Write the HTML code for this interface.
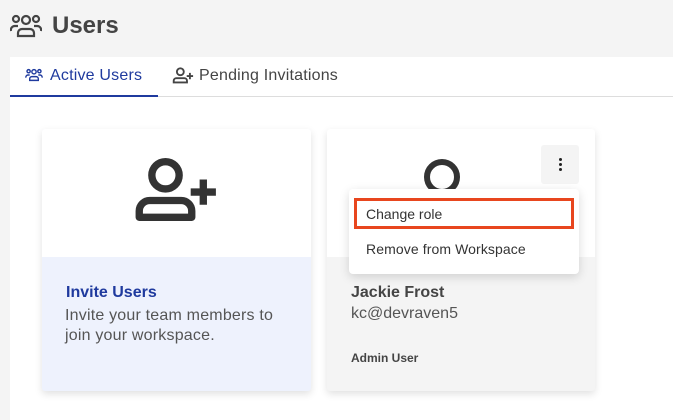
<!DOCTYPE html>
<html><head><style>
*{margin:0;padding:0;box-sizing:border-box}
body{width:673px;height:420px;background:#f4f4f4;font-family:"Liberation Sans",sans-serif;position:relative;overflow:hidden;color:#333}
.abs{position:absolute}
</style></head><body>
<svg class="abs" style="left:10px;top:13px" width="32" height="26" viewBox="0 0 32 26" fill="none" stroke="#444" stroke-width="2.2">
<circle cx="16" cy="7" r="4"/><circle cx="6" cy="6" r="3"/><circle cx="26" cy="6" r="3"/>
<path d="M8 23v-3a4 4 0 0 1 4-4h8a4 4 0 0 1 4 4v3z"/><path d="M1 18a4 4 0 0 1 4-5h3M31 18a4 4 0 0 0-4-5h-3"/>
</svg>
<div class="abs" style="left:52px;top:12px;font-size:24px;font-weight:bold;color:#444">Users</div>
<div class="abs" style="left:10px;top:57px;width:663px;height:363px;background:#fff"></div>
<div class="abs" style="left:10px;top:96px;width:663px;height:1px;background:#ddd"></div>
<div class="abs" style="left:10px;top:95px;width:148px;height:2px;background:#1f3a9e"></div>
<svg class="abs" style="left:24px;top:68px" width="20" height="14" viewBox="0 0 32 26" fill="none" stroke="#1f3a9e" stroke-width="2.6">
<circle cx="16" cy="7" r="4"/><circle cx="6" cy="6" r="3"/><circle cx="26" cy="6" r="3"/>
<path d="M8 23v-3a4 4 0 0 1 4-4h8a4 4 0 0 1 4 4v3z"/><path d="M1 18a4 4 0 0 1 4-5h3M31 18a4 4 0 0 0-4-5h-3"/>
</svg>
<div class="abs" style="left:50px;top:67px;font-size:16px;color:#1f3a9e;letter-spacing:0.2px">Active Users</div>
<svg class="abs" style="left:172px;top:67px" width="22" height="17" viewBox="0 0 80 64" fill="none" stroke="#444" stroke-width="7">
<circle cx="30" cy="18" r="13"/><path d="M5 58v-6a10 10 0 0 1 10-10h30a10 10 0 0 1 10 10v6z"/><path d="M66 22v24M54 34h24"/>
</svg>
<div class="abs" style="left:199px;top:67px;font-size:16px;color:#444;letter-spacing:0.2px">Pending Invitations</div>

<div class="abs" style="left:42px;top:129px;width:269px;height:262px;background:#eef2fd;box-shadow:0 3px 8px rgba(0,0,0,.12);border-radius:3px;overflow:hidden">
<div style="height:128px;background:#fff"></div>
<div class="abs" style="left:24px;top:155px;font-size:16px;font-weight:bold;color:#1f3a9e">Invite Users</div>
<div class="abs" style="left:23px;top:177px;font-size:16px;line-height:20px;color:#555;width:235px;letter-spacing:0.2px">Invite your team members to join your workspace.</div>
</div>
<svg class="abs" style="left:134px;top:156px" width="84" height="68" viewBox="0 0 80 64" fill="none" stroke="#333" stroke-width="7" stroke-linejoin="round">
<circle cx="30" cy="18" r="13"/><path d="M5 58v-6a10 10 0 0 1 10-10h30a10 10 0 0 1 10 10v6z"/><path d="M66 22v24M54 34h24"/>
</svg>

<div class="abs" style="left:327px;top:129px;width:268px;height:262px;background:#f4f4f4;box-shadow:0 3px 8px rgba(0,0,0,.12);border-radius:3px;overflow:hidden">
<div style="height:128px;background:#fff"></div>
<div class="abs" style="left:24px;top:155px;font-size:16px;font-weight:bold;color:#444">Jackie Frost</div>
<div class="abs" style="left:24px;top:176px;font-size:16px;color:#555">kc@devraven5</div>
<div class="abs" style="left:24px;top:222px;font-size:12px;font-weight:bold;color:#444">Admin User</div>
</div>
<div class="abs" style="left:424px;top:159px;width:36px;height:36px;border:6px solid #333;border-radius:50%"></div>
<div class="abs" style="left:541px;top:145px;width:38px;height:39px;background:#f4f4f4;border-radius:3px"></div>
<div class="abs" style="left:559px;top:158px;width:3px;height:3px;background:#222;border-radius:50%;box-shadow:0 5px 0 #222,0 10px 0 #222"></div>
<div class="abs" style="left:349px;top:189px;width:230px;height:85px;background:#fff;border-radius:4px;box-shadow:0 3px 10px rgba(0,0,0,.15)"></div>
<div class="abs" style="left:354px;top:198px;width:220px;height:31px;border:3px solid #e8461e"></div>
<div class="abs" style="left:366px;top:206px;font-size:14px;color:#333">Change role</div>
<div class="abs" style="left:366px;top:241px;font-size:14px;color:#333;letter-spacing:0.1px">Remove from Workspace</div>
</body></html>
